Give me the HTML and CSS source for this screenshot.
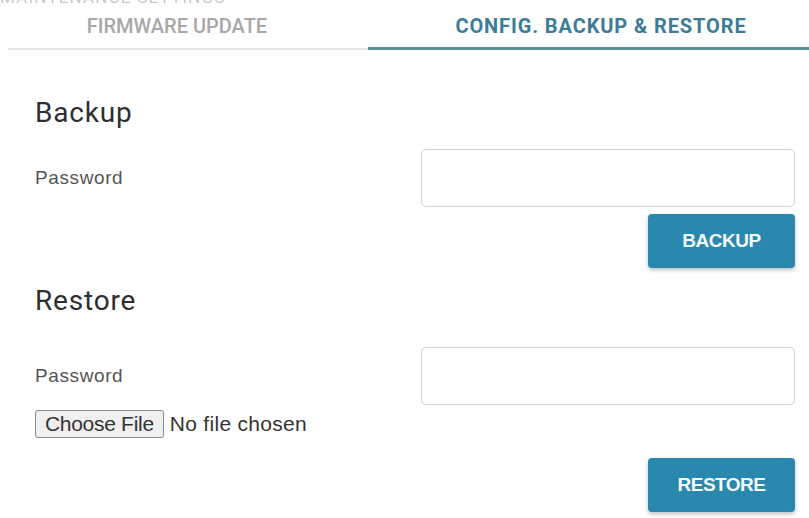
FILE: index.html
```html
<!DOCTYPE html>
<html>
<head>
<meta charset="utf-8">
<link rel="stylesheet" href="styles.css">
</head>
<body>
<div class="page">
  <div class="cut-title"><span>MAINTENANCE SETTINGS</span></div>
  <div class="tabs">
    <div class="tab">FIRMWARE UPDATE</div>
    <div class="tab active">CONFIG. BACKUP &amp; RESTORE</div>
  </div>

  <section class="section">
    <h2 class="heading">Backup</h2>
    <div class="row">
      <label class="label">Password</label>
      <input class="field" type="password">
    </div>
    <div class="actions">
      <button class="btn">BACKUP</button>
    </div>
  </section>

  <section class="section restore">
    <h2 class="heading">Restore</h2>
    <div class="row">
      <label class="label">Password</label>
      <input class="field" type="password">
    </div>
    <div class="file-row">
      <span class="file-btn">Choose File</span>
      <span class="file-text">No file chosen</span>
    </div>
    <div class="actions restore-actions">
      <button class="btn">RESTORE</button>
    </div>
  </section>
</div>
</body>
</html>
```

FILE: styles.css
```css
* { box-sizing: border-box; }
html, body { margin: 0; padding: 0; background: #ffffff; }
body { font-family: Roboto, "Liberation Sans", Arial, sans-serif; overflow: hidden; }

.page { width: 809px; height: 518px; overflow: hidden; }

.cut-title {
  height: 5px;
  overflow: hidden;
}
.cut-title span {
  display: block;
  margin-top: -12px;
  font-size: 17px;
  line-height: 18px;
  color: #c8c8c8;
  letter-spacing: 1.2px;
  filter: blur(0.6px);
}

.tabs {
  display: grid;
  grid-template-columns: 360px 1fr;
  margin-left: 8px;
  margin-top: 6px;
}
.tab {
  font-size: 20px;
  font-weight: 500;
  color: #a8a8a8;
  text-align: center;
  padding: 4px 22px 10px 0;
  border-bottom: 2px solid #e6e6e6;
  line-height: 23px;
}
.tab.active {
  color: #3d7c94;
  font-weight: 700;
  letter-spacing: 0.9px;
  padding: 4px 0 9px 25px;
  border-bottom: 3px solid #5e8e9c;
}

.section { padding: 0 14px 0 35px; }
.heading {
  margin: 48px 0 0;
  font-size: 28px;
  font-weight: 400;
  color: #2e2e2e;
  line-height: 30px;
  letter-spacing: 0.8px;
}
.row {
  display: flex;
  align-items: center;
  margin-top: 21px;
}
.label {
  width: 386px;
  font-family: "Liberation Sans", Arial, sans-serif;
  font-size: 19px;
  color: #555;
  letter-spacing: 0.6px;
}
.field {
  width: 374px;
  height: 58px;
  border: 1.5px solid #d4d4d4;
  border-radius: 5px;
  background: #fff;
  outline: none;
}
.actions {
  display: flex;
  justify-content: flex-end;
  margin-top: 7px;
}
.btn {
  width: 147px;
  height: 54px;
  background: #2a87ad;
  color: #f2fbff;
  border: none;
  border-radius: 4px;
  font-family: "Liberation Sans", Arial, sans-serif;
  font-size: 19px;
  font-weight: 700;
  letter-spacing: -0.5px;
  box-shadow: 0 2px 4px rgba(0,0,0,0.25);
}
.restore .heading { margin-top: 18px; }
.restore .row { margin-top: 31px; }
.file-row {
  display: flex;
  align-items: center;
  margin-top: 5px;
}
.file-btn {
  display: inline-block;
  height: 28px;
  padding: 0 9px;
  border: 1.5px solid #8a8a8a;
  border-radius: 3px;
  background: #efefef;
  font-family: "Liberation Sans", Arial, sans-serif;
  font-size: 21px;
  line-height: 25px;
  color: #333;
  letter-spacing: -0.3px;
}
.file-text {
  margin-left: 6px;
  font-family: "Liberation Sans", Arial, sans-serif;
  font-size: 21px;
  color: #333;
  letter-spacing: 0.3px;
}
.restore-actions { margin-top: 20px; }
```
